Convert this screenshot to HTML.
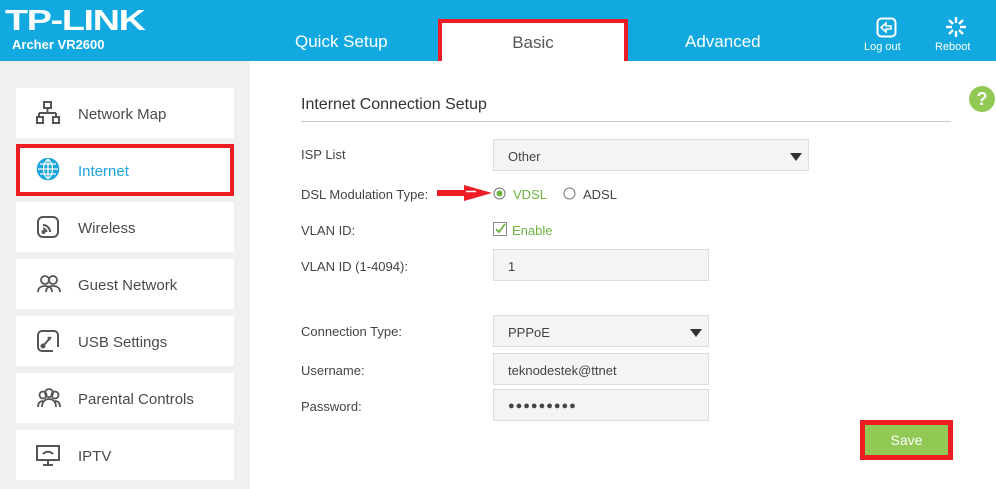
<!DOCTYPE html>
<html><head><meta charset="utf-8"><style>
*{margin:0;padding:0;box-sizing:border-box}
body{width:996px;height:489px;overflow:hidden;background:#fff;font-family:"Liberation Sans",sans-serif;position:relative;color:#4a4a4a}
.hdr{position:absolute;left:0;top:0;width:996px;height:61px;background:#11a9e0}
.logo{position:absolute;left:5px;top:5px;color:#fff;font:bold 29px "Liberation Sans",sans-serif;letter-spacing:-1px;transform:scaleX(1.3);transform-origin:left}
.model{position:absolute;left:12px;top:37px;color:#fff;font:bold 13px "Liberation Sans",sans-serif}
.tab{position:absolute;top:32px;color:#fff;font-size:17px}
.basic{position:absolute;left:438px;top:19px;width:190px;height:42px;background:#fff;border:4px solid #ee1c25;border-bottom:none;text-align:center;font-size:17px;color:#555;padding-top:10px}
.hi{position:absolute;color:#fff;font-size:11px;text-align:center}
.side{position:absolute;left:0;top:61px;width:250px;height:428px;background:#f0f0f0}
.item{position:absolute;left:16px;width:218px;height:50px;background:#fff;font-size:15px;color:#4a4a4a}
.item span{position:absolute;left:62px;top:18px}
.item svg{position:absolute;left:20px;top:13px}
.sel{border:4px solid #ee1c25;color:#1ea5de}
.sel span{left:58px;top:15px}
.sel svg{left:16px;top:9px}
.title{position:absolute;left:301px;top:96px;font-size:16px;color:#333}
.line{position:absolute;left:301px;top:121px;width:650px;height:1px;background:#ccc}
.lbl{position:absolute;left:301px;font-size:13px;color:#444}
.box{position:absolute;background:#f4f4f4;border:1px solid #ddd;font-size:13px;color:#444;padding:9px 0 0 14px}
.tri{position:absolute;right:6px;top:13px;width:0;height:0;border-left:6px solid transparent;border-right:6px solid transparent;border-top:8px solid #333}
.help{position:absolute;left:969px;top:86px;width:26px;height:26px;border-radius:50%;background:#92c854;color:#fff;font:bold 18px "Liberation Sans";text-align:center;line-height:26px}
</style></head><body>
<div class="hdr">
<div class="logo">TP-LINK</div>
<div class="model">Archer VR2600</div>
<div class="tab" style="left:295px">Quick Setup</div>
<div class="tab" style="left:685px">Advanced</div>
<div class="basic">Basic</div>
<svg style="position:absolute;left:876px;top:17px" width="21" height="21" viewBox="0 0 21 21"><rect x="1.5" y="1.5" width="18" height="18" rx="4" fill="none" stroke="#fff" stroke-width="2"/><path d="M5 10.5 L10 6 V9 H15 V12 H10 V15 Z" fill="none" stroke="#fff" stroke-width="1.6"/></svg>
<div class="hi" style="left:864px;top:41px">Log out</div>
<svg style="position:absolute;left:945px;top:16px" width="22" height="22" viewBox="0 0 22 22" stroke="#fff" stroke-width="2.4"><path d="M11 1v6M11 15v6M1 11h6M15 11h6M4 4l4 4M14 14l4 4M18 4l-4 4M8 14l-4 4"/></svg>
<div class="hi" style="left:935px;top:41px">Reboot</div>
</div>
<div class="side">
<div class="item" style="top:27px"><svg width="24" height="24" viewBox="0 0 24 24" fill="none" stroke="#555" stroke-width="2"><rect x="8" y="1" width="7" height="6"/><path d="M11.5 7v5M3 12h17M3 12v4M20 12v4"/><rect x="1" y="16" width="6" height="6"/><rect x="17" y="16" width="6" height="6"/></svg><span>Network Map</span></div>
<div class="item sel" style="top:83px;height:52px"><svg width="24" height="24" viewBox="0 0 24 24" fill="none" stroke="#1ea5de" stroke-width="1.6"><circle cx="12" cy="12" r="10.5" fill="#1ea5de"/><path d="M12 2v20M2 12h20M4 7h16M4 17h16M12 2c-6 5-6 15 0 20M12 2c6 5 6 15 0 20" stroke="#fff" stroke-width="1.2"/></svg><span>Internet</span></div>
<div class="item" style="top:141px"><svg width="24" height="24" viewBox="0 0 24 24" fill="none" stroke="#555" stroke-width="2"><rect x="2" y="2" width="20" height="20" rx="5"/><path d="M7 10a7 7 0 0 1 7 7M7 13.5a3.5 3.5 0 0 1 3.5 3.5" /><circle cx="7.5" cy="17" r="1" fill="#555"/></svg><span>Wireless</span></div>
<div class="item" style="top:198px"><svg width="26" height="24" viewBox="0 0 26 24" fill="none" stroke="#555" stroke-width="1.8"><circle cx="9" cy="8" r="4"/><circle cx="17" cy="8" r="4"/><path d="M2 20c0-4 3-6 7-6s7 2 7 6M10 20c0-4 3-6 7-6s7 2 7 6"/></svg><span>Guest Network</span></div>
<div class="item" style="top:255px"><svg width="24" height="24" viewBox="0 0 24 24" fill="none" stroke="#555" stroke-width="2"><path d="M17 22H6a4 4 0 0 1-4-4V6a4 4 0 0 1 4-4h12a4 4 0 0 1 4 4v12"/><path d="M7 17l8-9M12 8l2 3"/><circle cx="7" cy="17" r="1.5" fill="#555"/></svg><span>USB Settings</span></div>
<div class="item" style="top:312px"><svg width="26" height="24" viewBox="0 0 26 24" fill="none" stroke="#555" stroke-width="1.8"><circle cx="7" cy="9" r="3.5"/><circle cx="13" cy="7" r="4"/><circle cx="19" cy="9" r="3.5"/><path d="M2 21c0-4 2-6 5-6M6 21c0-5 3-8 7-8s7 3 7 8M24 21c0-4-2-6-5-6"/></svg><span>Parental Controls</span></div>
<div class="item" style="top:369px"><svg width="24" height="24" viewBox="0 0 24 24" fill="none" stroke="#555" stroke-width="2"><rect x="1" y="3" width="22" height="14"/><path d="M12 17v4M7 22h10M7 11c3-3 7-3 10 0"/></svg><span>IPTV</span></div>
</div>
<div class="help">?</div>
<div class="title">Internet Connection Setup</div>
<div class="line"></div>
<div class="lbl" style="top:147px">ISP List</div>
<div class="box" style="left:493px;top:139px;width:316px;height:32px">Other<div class="tri"></div></div>
<div class="lbl" style="top:187px">DSL Modulation Type:</div>
<svg style="position:absolute;left:436px;top:184px" width="58" height="18" viewBox="0 0 58 18"><path d="M1 6H28V1L56 9L28 17V12H1Z" fill="#ee1c25"/><path d="M30 7.5H40" stroke="#fff" stroke-width="1.5"/></svg>
<svg style="position:absolute;left:493px;top:187px" width="13" height="13"><circle cx="6.5" cy="6.5" r="5.5" fill="#fff" stroke="#777"/><circle cx="6.5" cy="6.5" r="3" fill="#6cb33f"/></svg>
<div class="lbl" style="left:513px;top:187px;color:#6cb33f">VDSL</div>
<svg style="position:absolute;left:563px;top:187px" width="13" height="13"><circle cx="6.5" cy="6.5" r="5.5" fill="#fff" stroke="#777"/></svg>
<div class="lbl" style="left:583px;top:187px">ADSL</div>
<div class="lbl" style="top:223px">VLAN ID:</div>
<svg style="position:absolute;left:493px;top:222px" width="14" height="14"><rect x=".5" y=".5" width="13" height="13" fill="#fff" stroke="#888"/><path d="M3 7l3 3 6-8" stroke="#6cb33f" stroke-width="1.8" fill="none"/></svg>
<div class="lbl" style="left:512px;top:223px;color:#6cb33f">Enable</div>
<div class="lbl" style="top:259px">VLAN ID (1-4094):</div>
<div class="box" style="left:493px;top:249px;width:216px;height:32px">1</div>
<div class="lbl" style="top:324px">Connection Type:</div>
<div class="box" style="left:493px;top:315px;width:216px;height:32px">PPPoE<div class="tri"></div></div>
<div class="lbl" style="top:363px">Username:</div>
<div class="box" style="left:493px;top:353px;width:216px;height:32px">teknodestek@ttnet</div>
<div class="lbl" style="top:399px">Password:</div>
<div class="box" style="left:493px;top:389px;width:216px;height:32px;font-size:11px;padding-top:10px;letter-spacing:1px">●●●●●●●●●</div>
<div style="position:absolute;left:860px;top:420px;width:93px;height:40px;border:5px solid #ee1c25;background:#92c854;color:#fff;font-size:14px;text-align:center;padding-top:7px">Save</div>
</body></html>
